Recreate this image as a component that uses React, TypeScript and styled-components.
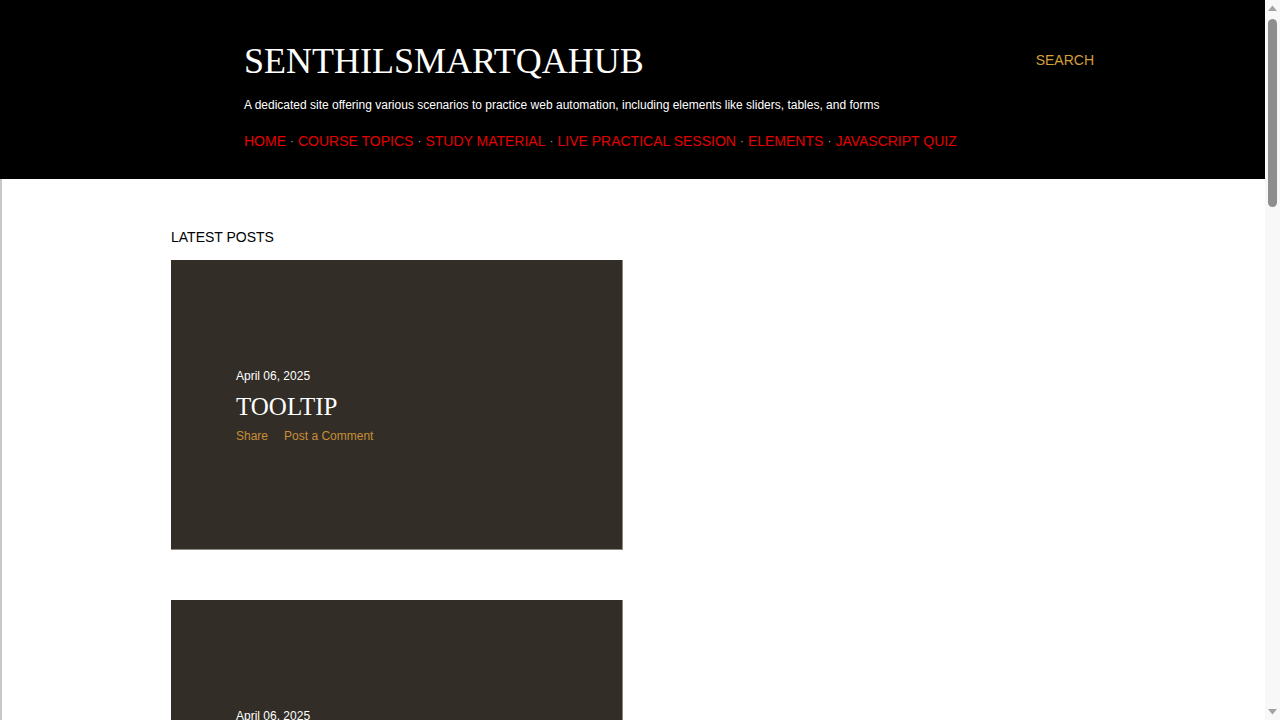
import React from "react";
import styled, { createGlobalStyle } from "styled-components";

const Global = createGlobalStyle`
  html, body { margin: 0; padding: 0; background: #ffffff; overflow: hidden; }
  body { font-family: "Liberation Sans", Arial, sans-serif; }
  a { text-decoration: none; }
`;

const Shell = styled.div`
  display: flex;
  height: 100vh;
`;

const Viewport = styled.div`
  flex: 1;
  min-width: 0;
  overflow: hidden;
`;

const ScrollBar = styled.div`
  width: 15px;
  flex: none;
  background: #f8f8f8;
  display: flex;
  flex-direction: column;
  align-items: center;
`;

const Arrow = styled.svg`
  width: 15px;
  height: 17px;
  flex: none;
  display: block;
`;

const Thumb = styled.div`
  width: 9px;
  height: 188px;
  margin-top: 2px;
  border-radius: 5px;
  background: #8e8e8e;
`;

const Spacer = styled.div`
  flex: 1;
`;

const Page = styled.div`
  border-left: 2px solid #c8c8c8;
  min-height: 100%;
`;

const Header = styled.header`
  background: #000000;
  height: 179px;
  box-sizing: border-box;
  padding: 40px 0 0 244px;
  margin-left: -2px;
`;

const TopRow = styled.div`
  display: flex;
  align-items: flex-start;
  justify-content: space-between;
  width: 850px;
`;

const Title = styled.h1`
  margin: 0;
  font-family: "Liberation Serif", "Times New Roman", serif;
  font-weight: 400;
  font-size: 36px;
  line-height: 42px;
  color: #ffffff;
`;

const Search = styled.span`
  color: #d29f3a;
  font-size: 14px;
  line-height: 16px;
  margin-top: 12px;
`;

const Tagline = styled.p`
  margin: 15px 0 0 0;
  color: #ffffff;
  font-size: 12px;
  line-height: 16px;
`;

const Nav = styled.nav`
  margin-top: 19px;
  display: flex;
  align-items: center;
  font-size: 14px;
  line-height: 18px;
`;

const NavLink = styled.a`
  color: #e50000;
  text-transform: uppercase;
`;

const Dot = styled.span`
  color: #9a9a9a;
  padding: 0 4px;
  font-size: 12px;
`;

const Main = styled.main`
  padding: 50px 0 0 169px;
`;

const SectionTitle = styled.h3`
  margin: 0 0 14px 0;
  font-size: 14px;
  line-height: 17px;
  font-weight: 400;
  color: #000000;
`;

const CardList = styled.div`
  display: flex;
  flex-direction: column;
  gap: 50px;
`;

const Card = styled.article`
  width: 452px;
  height: 290px;
  box-sizing: border-box;
  background: #322d26;
  border-right: 1px solid #8c8985;
  border-bottom: 1px solid #8c8985;
  padding: 109px 0 0 65px;
`;

const DateText = styled.div`
  color: #ffffff;
  font-size: 12px;
  line-height: 14px;
`;

const PostTitle = styled.h2`
  margin: 8px 0 0 0;
  font-family: "Liberation Serif", "Times New Roman", serif;
  font-weight: 400;
  font-size: 25px;
  line-height: 32px;
  color: #ffffff;
`;

const Actions = styled.div`
  margin-top: 6px;
  display: flex;
  gap: 16px;
`;

const Action = styled.a`
  color: #c88f38;
  font-size: 12px;
  line-height: 14px;
`;

const links = ["Home", "Course Topics", "Study Material", "Live Practical Session", "Elements", "JavaScript Quiz"];
const posts = ["TOOLTIP", "SLIDER", "TABLES", "FORMS"];

export default function App() {
  return (
    <>
      <Global />
      <Shell>
        <Viewport>
          <Page>
            <Header>
              <TopRow>
                <Title>SENTHILSMARTQAHUB</Title>
                <Search>SEARCH</Search>
              </TopRow>
              <Tagline>
                A dedicated site offering various scenarios to practice web automation, including elements like sliders, tables, and forms
              </Tagline>
              <Nav>
                {links.map((l, i) => (
                  <React.Fragment key={l}>
                    {i > 0 && <Dot>·</Dot>}
                    <NavLink href="#">{l}</NavLink>
                  </React.Fragment>
                ))}
              </Nav>
            </Header>
            <Main>
              <SectionTitle>LATEST POSTS</SectionTitle>
              <CardList>
                {posts.map((p) => (
                  <Card key={p}>
                    <DateText>April 06, 2025</DateText>
                    <PostTitle>{p}</PostTitle>
                    <Actions>
                      <Action href="#">Share</Action>
                      <Action href="#">Post a Comment</Action>
                    </Actions>
                  </Card>
                ))}
              </CardList>
            </Main>
          </Page>
        </Viewport>
        <ScrollBar>
          <Arrow viewBox="0 0 15 17">
            <path d="M3 11 L7.5 5.5 L12 11 Z" fill="#a3a3a3" />
          </Arrow>
          <Thumb />
          <Spacer />
          <Arrow viewBox="0 0 15 17">
            <path d="M3 6 L7.5 11.5 L12 6 Z" fill="#a3a3a3" />
          </Arrow>
        </ScrollBar>
      </Shell>
    </>
  );
}
